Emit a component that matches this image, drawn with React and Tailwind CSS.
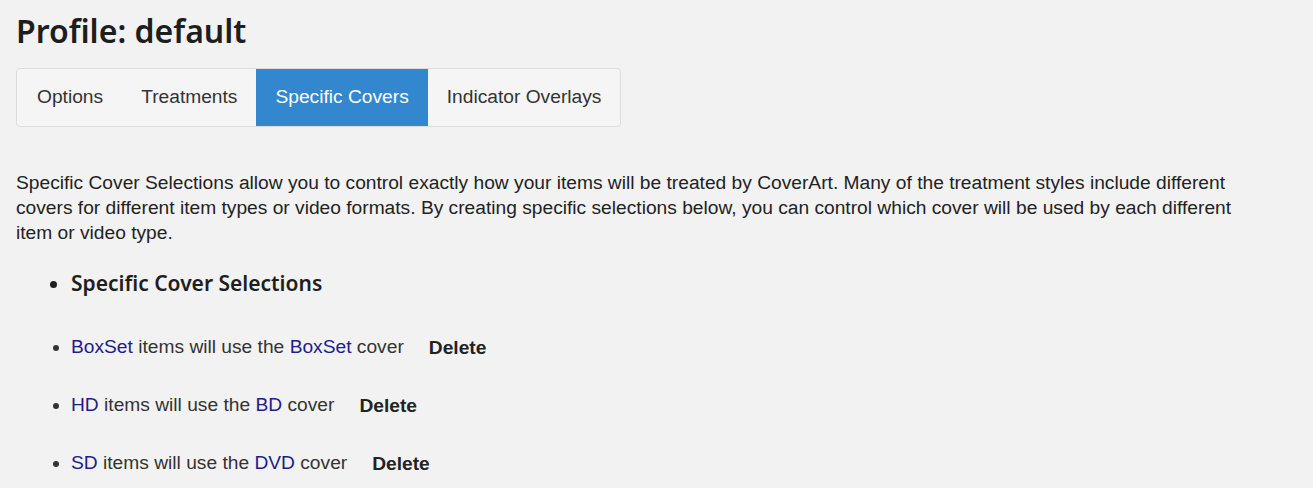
export default function App() {
  const tabs = ['Options', 'Treatments', 'Specific Covers', 'Indicator Overlays'];
  const active = 'Specific Covers';
  const rules = [
    { from: 'BoxSet', to: 'BoxSet' },
    { from: 'HD', to: 'BD' },
    { from: 'SD', to: 'DVD' },
  ];

  return (
    <div className="min-h-[488px] bg-[#f2f2f2] px-4 pt-[11px] text-[#333] font-['Liberation_Sans',Arial,sans-serif]">
      {/* Header */}
      <h1 className="font-['Noto_Sans',sans-serif] text-[32px] leading-[40px] font-semibold text-[#1e1e1e]">
        Profile: default
      </h1>

      {/* Tabs */}
      <div className="mt-[17px] inline-flex rounded-[4px] border border-[#dcdcdc] bg-[#f5f5f5]">
        {tabs.map((tab, i) => (
          <button
            key={tab}
            className={
              tab === active
                ? 'h-[57px] px-[19px] text-[19.2px] bg-[#3287cf] text-white'
                : i === 0
                ? 'h-[57px] pl-[20px] pr-[19px] text-[19.2px] text-[#333]'
                : 'h-[57px] px-[19px] text-[19.2px] text-[#333]'
            }
          >
            {tab}
          </button>
        ))}
      </div>

      {/* Description */}
      <p className="mt-[43px] w-[1250px] text-[19.2px] leading-[25px] text-[#222]">
        Specific Cover Selections allow you to control exactly how your items will be treated by CoverArt. Many of the treatment styles include different covers for different item types or video formats. By creating specific selections below, you can control which cover will be used by each different item or video type.
      </p>

      <ul className="mt-[23px] list-disc pl-[55px]">
        <li className="font-['Noto_Sans',sans-serif] text-[21px] leading-[30px] font-semibold text-[#1e1e1e]">
          Specific Cover Selections
        </li>
        {rules.map((r, i) => (
          <li
            key={r.from}
            className={(i === 0 ? 'mt-[36px]' : 'mt-[33px]') + ' text-[19.2px] leading-[25px] text-[#333]'}
          >
            <a className="text-[#1c1c8a]">{r.from}</a> items will use the{' '}
            <a className="text-[#1c1c8a]">{r.to}</a> cover
            <button className="ml-[25px] font-bold text-[#222] relative top-[1px]">Delete</button>
          </li>
        ))}
      </ul>
    </div>
  );
}
